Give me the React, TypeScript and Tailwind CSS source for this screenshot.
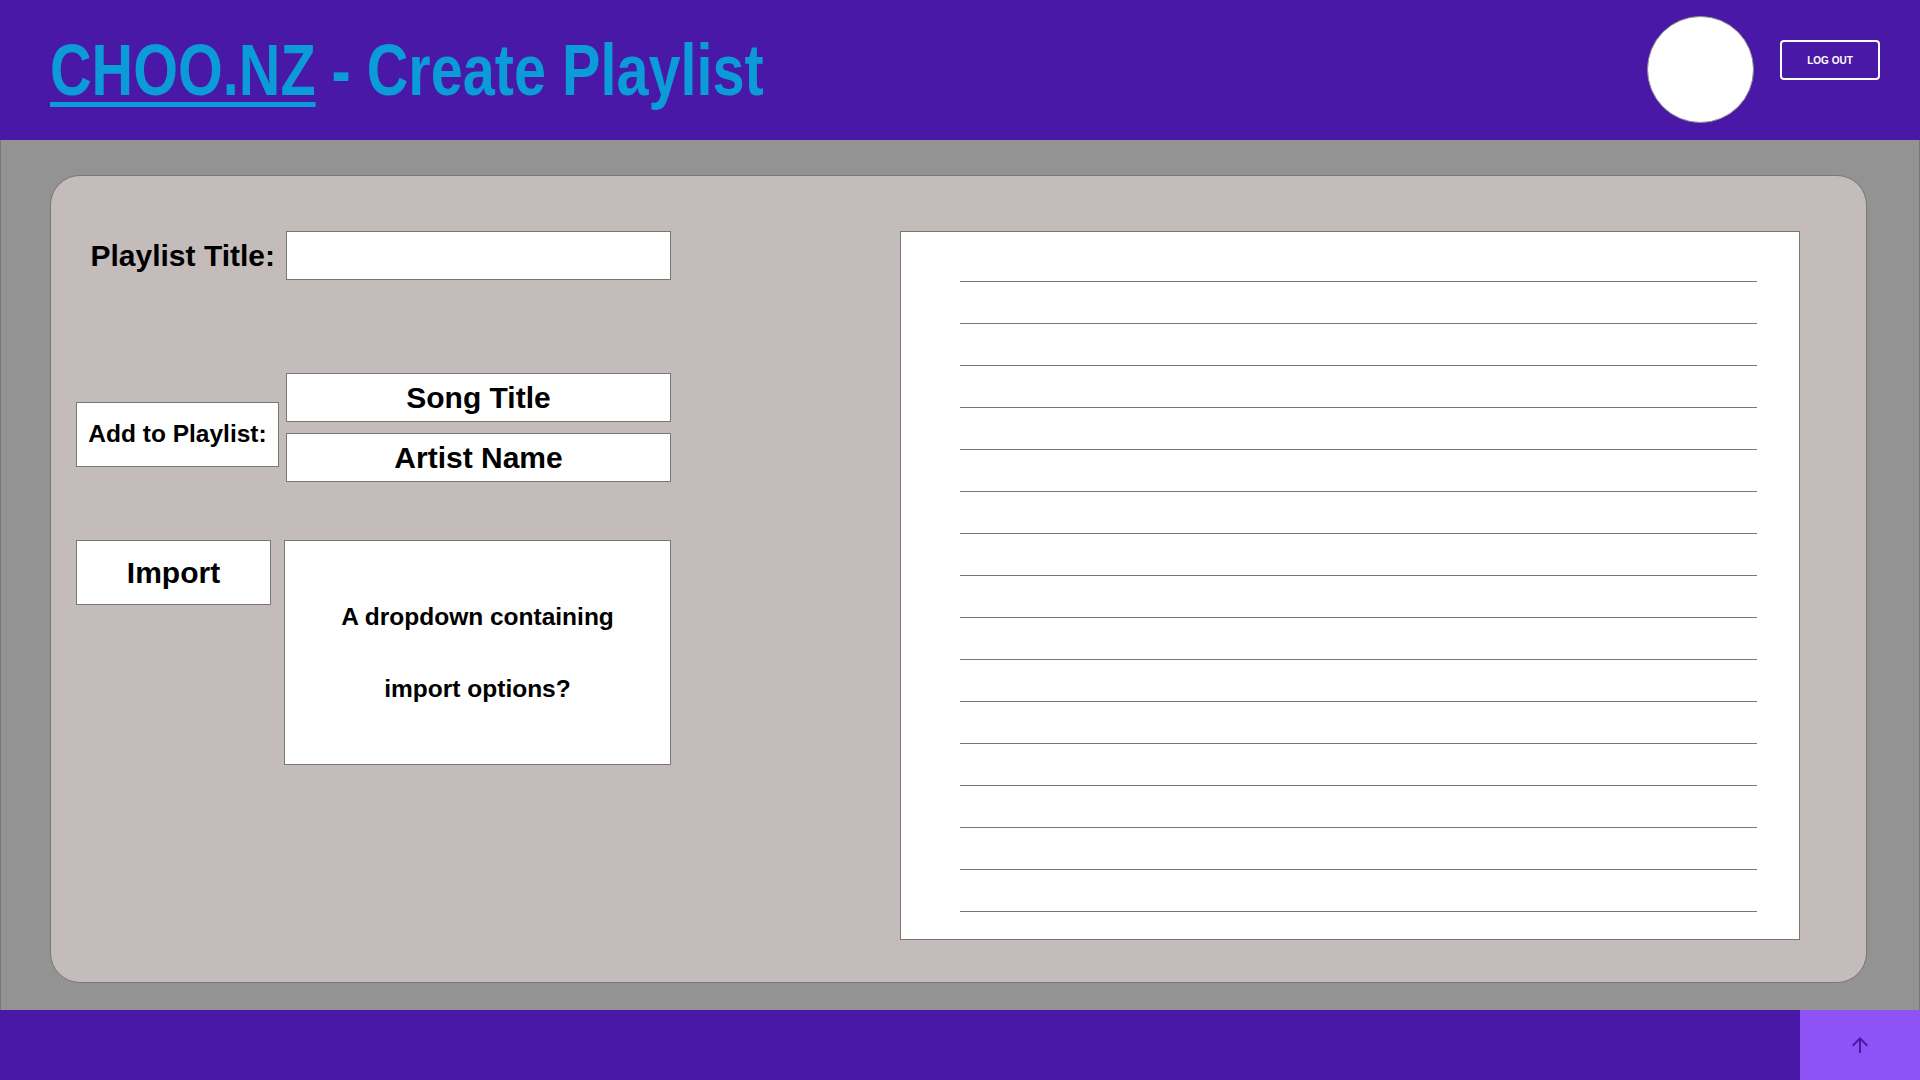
import { MdArrowUpward } from "react-icons/md";

const rows = Array.from({ length: 16 }, (_, i) => i);

function Box({ className, children }: { className: string; children?: React.ReactNode }) {
  return (
    <div className={`flex items-center justify-center bg-white border border-[#777777] font-bold text-black ${className}`}>
      {children}
    </div>
  );
}

export default function App() {
  return (
    <div className="h-screen w-full flex flex-col font-['Liberation_Sans',Arial,sans-serif] overflow-hidden">
      {/* header */}
      <header className="h-[140px] shrink-0 bg-[#4a18a6] flex items-center pl-[50px] pr-[40px]">
        <h1 className="inline-block origin-left scale-x-[0.8] text-[72px] leading-[72px] font-bold text-[#0b9bd9] whitespace-nowrap">
          <a href="#" className="underline decoration-[5px] underline-offset-[7px]">CHOO.NZ</a> - Create Playlist
        </h1>
        <div className="ml-auto self-stretch flex items-start gap-[26px]">
          <div className="mt-[16px] w-[107px] h-[107px] rounded-full bg-white border border-[#8a8a8a]" />
          <button className="mt-[40px] w-[100px] h-[40px] rounded-[4px] border-2 border-white text-white text-[10px] font-bold">
            LOG OUT
          </button>
        </div>
      </header>

      {/* main */}
      <main className="flex-1 bg-[#939393] border-x border-[#777777] pt-[35px] pb-[27px] pl-[49px] pr-[52px] flex">
        <div className="flex-1 bg-[#c4bbbb] border border-[#777777] rounded-[30px] flex justify-between pt-[55px] pl-[25px] pr-[66px]">
          <div className="flex flex-col">
            <div className="flex items-center">
              <span className="w-[210px] pr-[11px] text-right text-[30px] font-bold text-black">Playlist Title:</span>
              <input className="w-[385px] h-[49px] bg-white border border-[#777777] outline-none" />
            </div>

            <div className="flex items-start mt-[93px]">
              <Box className="w-[203px] h-[65px] mt-[29px] text-[24.5px]">Add to Playlist:</Box>
              <div className="ml-[7px] flex flex-col gap-[11px]">
                <Box className="w-[385px] h-[49px] text-[30px]">Song Title</Box>
                <Box className="w-[385px] h-[49px] text-[30px]">Artist Name</Box>
              </div>
            </div>

            <div className="flex items-start mt-[58px]">
              <Box className="w-[195px] h-[65px] text-[30px]">Import</Box>
              <Box className="ml-[13px] w-[387px] h-[225px] text-[24.5px] leading-[72px] text-center">
                <p>
                  A dropdown containing
                  <br />
                  import options?
                </p>
              </Box>
            </div>
          </div>

          <div className="w-[900px] h-[709px] bg-white border border-[#777777] pt-[8px] pl-[59px] pr-[42px]">
            {rows.map((r) => (
              <div key={r} className="h-[42px] border-b border-[#777777]" />
            ))}
          </div>
        </div>
      </main>

      {/* footer */}
      <footer className="h-[70px] shrink-0 bg-[#4a18a6] flex justify-end">
        <button className="w-[120px] h-full bg-[#8f52f5] flex items-center justify-center text-[#4a18a6]">
          <MdArrowUpward size={24} />
        </button>
      </footer>
    </div>
  );
}
